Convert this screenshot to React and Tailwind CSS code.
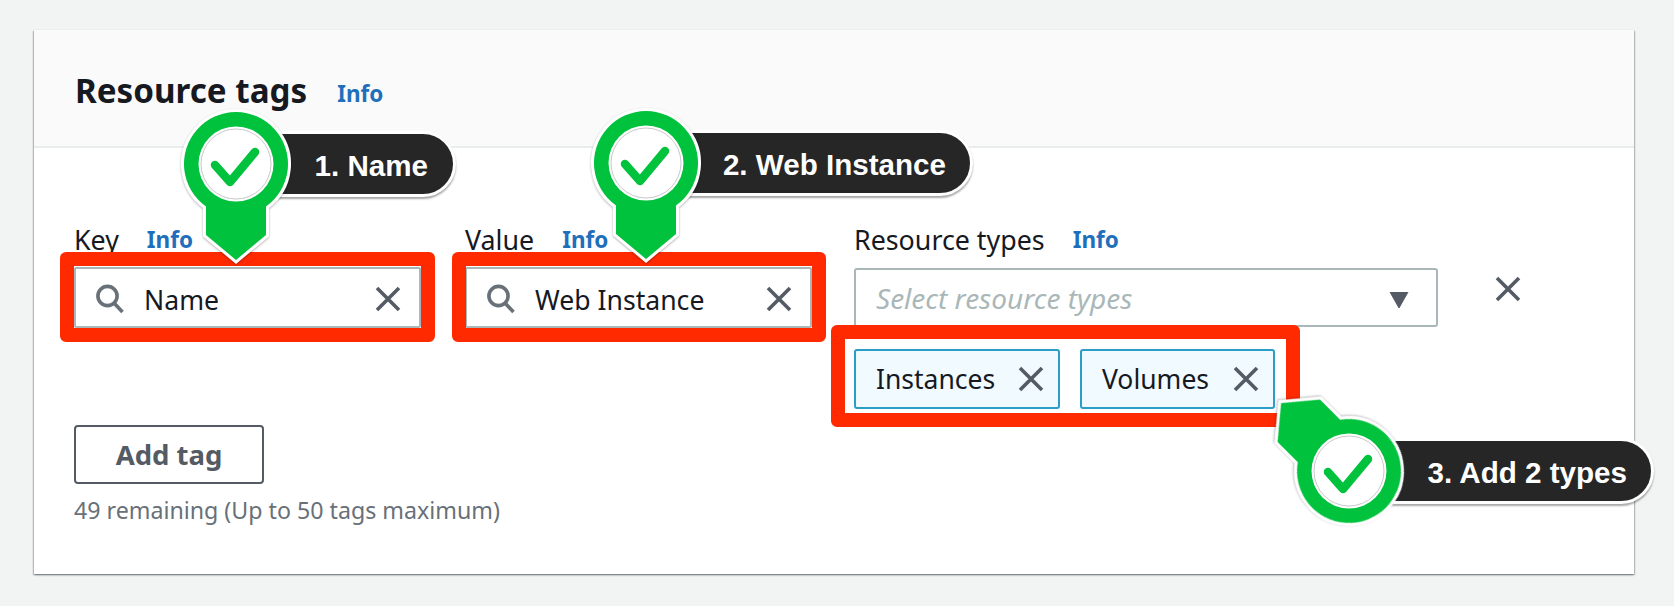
import React from "react";

function XIcon({ className }) {
  return (
    <svg viewBox="0 0 26 26" className={className} fill="none" stroke="#545b64" strokeWidth="3.6">
      <path d="M2 2 L24 24 M24 2 L2 24" />
    </svg>
  );
}

function SearchIcon() {
  return (
    <svg viewBox="0 0 30 30" className="w-[30px] h-[30px] shrink-0" fill="none" stroke="#687078" strokeWidth="3.6">
      <circle cx="12.5" cy="12" r="9.6" />
      <path d="M19 19 L27.5 28" />
    </svg>
  );
}

function Label({ text }) {
  return (
    <div className="flex items-center h-[35px] pt-[3px] text-[26.8px] leading-[32px] text-[#16191f]">
      <span>{text}</span>
      <span className="ml-[28px] font-bold text-[22.5px] text-[#1f6fba]">Info</span>
    </div>
  );
}

function SearchInput({ value }) {
  return (
    <div className="flex items-center h-[61px] border-2 border-[#aab7b8] rounded-[2px] bg-white pl-[19px] pr-[18px]">
      <div className="flex items-center w-full pt-[3px]">
        <SearchIcon />
        <span className="ml-[19px] mt-[3px] text-[26.6px] text-[#16191f] flex-1">{value}</span>
        <XIcon className="w-[26px] h-[26px]" />
      </div>
    </div>
  );
}

function Token({ text, width }) {
  return (
    <div className={`flex items-center justify-between h-[60px] border-2 border-[#2a9ec9] rounded-[3px] bg-[#f1faff] pl-[20px] pr-[14px] text-[26.5px] text-[#16191f] ${width}`}>
      <span className="mt-[2px]">{text}</span>
      <XIcon className="w-[26px] h-[26px]" />
    </div>
  );
}

function Pin({ className, rotate }) {
  return (
    <svg viewBox="-62 -62 124 124" className={`absolute overflow-visible w-[124px] h-[124px] ${className}`}>
      <path
        d="M -30 42.5 A 52 52 0 1 1 30 42.5 L 30 71 L 0 96 L -30 71 Z"
        transform={`rotate(${rotate})`}
        fill="#00c23d"
        stroke="#ffffff"
        strokeWidth="6"
        paintOrder="stroke"
        strokeLinejoin="miter"
        style={{ filter: "drop-shadow(0 1px 1px rgba(0,0,0,0.3))" }}
      />
      <circle r="37.5" fill="#ffffff" />
      <circle r="35" fill="none" stroke="#c9c9c9" strokeWidth="1" />
      <path
        d="M -21 1 L -6 18 L 19 -12"
        fill="none"
        stroke="#00c23d"
        strokeWidth="8.5"
        strokeLinecap="round"
        strokeLinejoin="round"
      />
    </svg>
  );
}

function Pill({ text, className }) {
  return (
    <div
      className={`absolute flex items-center justify-end h-[66px] pt-[5px] border-[3px] border-white rounded-full bg-[#262626] text-white font-bold text-[29.6px] shadow-[0_2px_2px_rgba(0,0,0,0.35)] ${className}`}
      style={{ fontFamily: '"Liberation Sans", Arial, sans-serif' }}
    >
      {text}
    </div>
  );
}

export default function App() {
  return (
    <div
      className="relative w-full h-[606px] bg-[#f2f3f3] pt-[30px] pl-[34px] pr-[40px] overflow-hidden"
      style={{ fontFamily: '"Noto Sans", "Open Sans", sans-serif' }}
    >
      <div className="bg-white h-[544px] shadow-[0_1px_2px_0_rgba(0,28,36,0.4),1px_1px_1px_0_rgba(0,28,36,0.15),-1px_1px_1px_0_rgba(0,28,36,0.15)]">
        <div className="flex items-center h-[118px] pl-[41px] pt-[5px] bg-[#fafafa] border-b-2 border-[#eaeded]">
          <h2 className="font-bold text-[33.2px] text-[#16191f]">Resource tags</h2>
          <span className="ml-[30px] mt-[7px] font-bold text-[22.5px] text-[#1f6fba]">Info</span>
        </div>

        <div className="pl-[40px] pt-[73px]">
          <div className="flex items-start">
            <div className="w-[347px]">
              <Label text="Key" />
              <div className="mt-[11px]">
                <SearchInput value="Name" />
              </div>
            </div>
            <div className="w-[347px] ml-[44px]">
              <Label text="Value" />
              <div className="mt-[11px]">
                <SearchInput value="Web Instance" />
              </div>
            </div>
            <div className="w-[584px] ml-[42px]">
              <Label text="Resource types" />
              <div className="mt-[12px] flex items-center h-[59px] border-2 border-[#aab7b8] rounded-[3px] bg-white pl-[20px] pr-[27px]">
                <span className="flex-1 italic text-[28px] text-[#aab7b8]">Select resource types</span>
                <svg viewBox="0 0 20 16" className="w-[20px] h-[16px] mt-[4px]">
                  <path d="M1 0 H19 L10 16 Z" fill="#545b64" stroke="#545b64" strokeWidth="1" strokeLinejoin="round" />
                </svg>
              </div>
              <div className="flex gap-[20px] mt-[22px]">
                <Token text="Instances" width="w-[206px]" />
                <Token text="Volumes" width="w-[195px]" />
              </div>
            </div>
            <XIcon className="w-[26px] h-[26px] ml-[57px] mt-[55px]" />
          </div>

          <button className="block mt-[16px] w-[190px] h-[59px] border-2 border-[#545b64] rounded-[4px] bg-white font-bold text-[27.5px] text-[#545b64]">
            Add tag
          </button>
          <p className="mt-[10px] text-[23.2px] leading-[32px] text-[#687078]">49 remaining (Up to 50 tags maximum)</p>
        </div>
      </div>

      <div className="absolute left-[60px] top-[252px] w-[375px] h-[90px] border-[14px] border-[#ff2a00] rounded-[6px]" />
      <div className="absolute left-[452px] top-[252px] w-[374px] h-[90px] border-[14px] border-[#ff2a00] rounded-[6px]" />
      <div className="absolute left-[831px] top-[325px] w-[469px] h-[102px] border-[14px] border-[#ff2a00] rounded-[6px]" />

      <Pill text="1. Name" className="left-[230px] top-[131px] w-[226px] pr-[25px]" />
      <Pill text="2. Web Instance" className="left-[640px] top-[130px] w-[333px] pr-[24px]" />
      <Pill text="3. Add 2 types" className="left-[1345px] top-[438px] w-[309px] pr-[24px]" />

      <Pin className="left-[174px] top-[102px]" rotate={0} />
      <Pin className="left-[584px] top-[101px]" rotate={0} />
      <Pin className="left-[1287px] top-[409px]" rotate={135} />
    </div>
  );
}
